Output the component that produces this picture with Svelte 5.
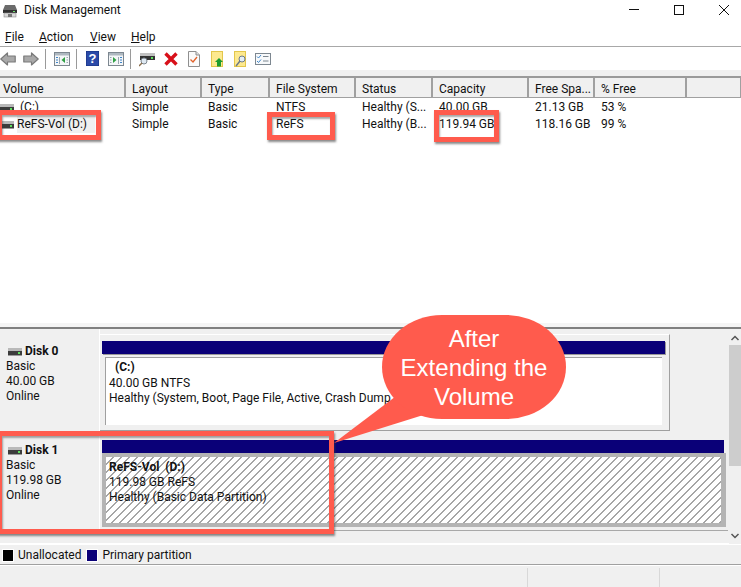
<script>
  const cols = [
    { label: 'Volume', w: 126 }, { label: 'Layout', w: 76 }, { label: 'Type', w: 68 },
    { label: 'File System', w: 86 }, { label: 'Status', w: 77 }, { label: 'Capacity', w: 96 },
    { label: 'Free Spa...', w: 66 }, { label: '% Free', w: 92 }, { label: '', w: 55 }
  ];
  const rows = [
    { name: '(C:)', cells: ['Simple', 'Basic', 'NTFS', 'Healthy (S...', '40.00 GB', '21.13 GB', '53 %'] },
    { name: 'ReFS-Vol (D:)', sel: true, cells: ['Simple', 'Basic', 'ReFS', 'Healthy (B...', '119.94 GB', '118.16 GB', '99 %'] }
  ];
</script>

{#snippet hdd()}
  <svg class="hdd" width="14" height="8" viewBox="0 0 14 8">
    <rect x="0" y="0" width="14" height="3" fill="#b9b9b9" />
    <rect x="0" y="3" width="14" height="4" fill="#3c3c3c" />
    <rect x="10" y="4" width="2" height="2" fill="#5fe05f" />
    <rect x="0" y="7" width="14" height="1" fill="#9a9a9a" />
  </svg>
{/snippet}

{#snippet arrow(dir)}
  <svg class="ti" width="16" height="16" viewBox="0 0 16 16">
    <path d={dir === 'l' ? 'M.8 8 7.500 2V5H15.200V11H7.500V14Z' : 'M15.200 8 8.500 2V5H.8V11H8.500V14Z'} fill="#a9a9a9" stroke="#7a7a7a" stroke-width="1.200" stroke-linejoin="round" />
  </svg>
{/snippet}

{#snippet panel(kind)}
  <svg class="ti" width="16" height="14" viewBox="0 0 16 14">
    <rect x=".5" y=".5" width="15" height="13" fill="#f4f6f8" stroke="#7d8790" />
    <rect x="1" y="1" width="14" height="2.5" fill="#aeb8c0" />
    {#if kind === 'l'}
      <path d="M5.500 5v7M12.500 5.500h1.500M12.500 8h1.500M12.500 10.500h1.500" stroke="#9aa6b0" fill="none" />
      <path d="M2 5.500h2M2 8h2M2 10.500h2" stroke="#3f86c9" fill="none" />
      <path d="M11 5v6L7.500 8Z" fill="#2ea043" />
    {:else}
      <path d="M10.500 5v7M2 5.500h1.500M2 8h1.500M2 10.500h1.500" stroke="#9aa6b0" fill="none" />
      <path d="M12 5.500h2M12 8h2M12 10.500h2" stroke="#3f86c9" fill="none" />
      <path d="M5 5v6L8.500 8Z" fill="#2ea043" />
    {/if}
  </svg>
{/snippet}

<div class="win">
  <div class="title">
    <svg width="14" height="14" viewBox="0 0 14 14">
      <path d="M2 1h10l2 5H0Z" fill="#6b6b6b" />
      <rect x="0" y="6" width="14" height="3" fill="#2f2f2f" />
      <rect x="10" y="7" width="2" height="1" fill="#6fe06f" />
      <rect x="1" y="9" width="12" height="4" fill="#d8d8d8" stroke="#8a8a8a" stroke-width=".6" />
      <rect x="5" y="10" width="4" height="3" fill="#777" />
    </svg>
    <span class="ttext">Disk Management</span>
    <div class="wbtns">
      <svg width="10" height="10" viewBox="0 0 10 10"><path d="M0 4.500h10" stroke="#111" /></svg>
      <svg width="10" height="10" viewBox="0 0 10 10"><rect x=".5" y=".5" width="9" height="9" fill="none" stroke="#111" /></svg>
      <svg width="10" height="10" viewBox="0 0 10 10"><path d="M0 0 10 10M10 0 0 10" stroke="#111" /></svg>
    </div>
  </div>

  <div class="menu">
    <span class="m1"><u>F</u>ile</span>
    <span class="m2"><u>A</u>ction</span>
    <span class="m3"><u>V</u>iew</span>
    <span class="m4"><u>H</u>elp</span>
  </div>

  <div class="toolbar">
    {@render arrow('l')}
    <span class="g7"></span>
    {@render arrow('r')}
    <i class="sep s1"></i>
    {@render panel('l')}
    <i class="sep s2"></i>
    <svg class="ti help" width="13" height="15" viewBox="0 0 13 15">
      <rect width="13" height="15" fill="#2b4aa8" />
      <rect x="0" y="0" width="13" height="15" fill="none" stroke="#16307e" />
      <text x="6.500" y="12" text-anchor="middle" class="q">?</text>
    </svg>
    <span class="g9"></span>
    {@render panel('r')}
    <i class="sep s3"></i>
    <svg class="ti dm" width="16" height="16" viewBox="0 0 16 16">
      <rect x="1" y="2" width="15" height="3" fill="#c2c2c2" />
      <rect x="1" y="5" width="15" height="4" fill="#333" />
      <rect x="12" y="6" width="2" height="2" fill="#5fe05f" />
      <circle cx="5" cy="10" r="3" fill="#dfe9f2" stroke="#7d8790" />
      <path d="M3 12 0 15" stroke="#8a6d4a" stroke-width="1.500" />
    </svg>
    <svg class="ti x" width="14" height="14" viewBox="0 0 14 14">
      <path d="M1.500 1.500 12.500 12.500M12.500 1.500 1.500 12.500" stroke="#d8101a" stroke-width="3.400" />
    </svg>
    <svg class="ti doc" width="12" height="16" viewBox="0 0 12 16">
      <path d="M.5.500H8L11.500 4V15.500H.5Z" fill="#fafafa" stroke="#8f8f8f" />
      <path d="M8 .5V4H11.500" fill="#ddd" stroke="#8f8f8f" />
      <path d="M2.500 8.500 5 11 9 6" fill="none" stroke="#e2622a" stroke-width="1.300" />
    </svg>
    <svg class="ti y1" width="13" height="16" viewBox="0 0 13 16">
      <rect x=".5" y=".5" width="11" height="15" fill="#fde98f" stroke="#e3c64b" />
      <path d="M8 7 12 11H10V15.500H6V11H4Z" fill="#1e9c2e" />
    </svg>
    <svg class="ti y2" width="13" height="16" viewBox="0 0 13 16">
      <rect x=".5" y=".5" width="11" height="15" fill="#fde98f" stroke="#e3c64b" />
      <circle cx="8" cy="8" r="3" fill="#e3eef6" stroke="#6d7a88" />
      <path d="M6 10 2 15" stroke="#6d7a88" stroke-width="1.500" />
    </svg>
    <svg class="ti chk" width="16" height="12" viewBox="0 0 16 12">
      <rect x=".5" y=".5" width="15" height="11" fill="#f7f9fb" stroke="#7d8790" />
      <path d="M2 3.500 3.500 5 6 2M2 8 3.500 9.500 6 6.500" fill="none" stroke="#3f86c9" />
      <path d="M8 3.500h5.500M8 8h5.500" stroke="#7d8790" />
    </svg>
  </div>

  <div class="band"></div>

  <div class="list">
    <div class="head">
      {#each cols as c}
        <div class="hc" style="width:{c.w}px">{c.label}</div>
      {/each}
    </div>
    {#each rows as r}
      <div class="row">
        <div class="cell first" style="width:{cols[0].w}px">
          {@render hdd()}
          <span class={r.sel ? 'nm sel' : 'nm c'}>{r.name}</span>
        </div>
        {#each r.cells as c, i}
          <div class="cell" style="width:{cols[i + 1].w}px">{c}</div>
        {/each}
      </div>
    {/each}
  </div>

  <div class="band2"></div>

  <div class="lower">
    <div class="disks">
      <div class="disk d0">
        <div class="dl">
          <div class="dn">{@render hdd()}<b>Disk 0</b></div>
          <div>Basic</div>
          <div>40.00 GB</div>
          <div>Online</div>
        </div>
        <div class="vwrap">
          <div class="vol v0">
            <div class="bar"></div>
            <div class="box">
              <b class="cname">(C:)</b>
              <div>40.00 GB NTFS</div>
              <div>Healthy (System, Boot, Page File, Active, Crash Dump</div>
            </div>
          </div>
        </div>
      </div>
      <div class="disk d1">
        <div class="dl">
          <div class="dn">{@render hdd()}<b>Disk 1</b></div>
          <div>Basic</div>
          <div>119.98 GB</div>
          <div>Online</div>
        </div>
        <div class="vwrap">
          <div class="vol v1">
            <div class="bar"></div>
            <div class="selbox">
              <div class="hatch">
                <b class="wsp">ReFS-Vol  (D:)</b>
                <div>119.98 GB ReFS</div>
                <div>Healthy (Basic Data Partition)</div>
              </div>
            </div>
          </div>
        </div>
      </div>
    </div>
    <div class="scroll">
      <svg width="10" height="6" viewBox="0 0 10 6"><path d="M1.500 5 5 1.500 8.500 5" fill="none" stroke="#555" stroke-width="1.500" /></svg>
      <div class="thumb"></div>
      <svg class="dn-ar" width="10" height="6" viewBox="0 0 10 6"><path d="M1.500 1 5 4.500 8.500 1" fill="none" stroke="#555" stroke-width="1.500" /></svg>
    </div>
  </div>

  <div class="legend">
    <i class="sw black"></i><span>Unallocated</span>
    <i class="sw blue"></i><span>Primary partition</span>
  </div>
  <div class="status"><i></i><i></i></div>

  <!-- annotations laid over the window -->
  <div class="hl h1"></div>
  <div class="hl h2"></div>
  <div class="hl h3"></div>
  <div class="hl h4"></div>
  <svg class="tail" width="120" height="60" viewBox="0 0 120 60"><path d="M0 59 78 0 118 22Z" fill="#ff5b4d" /></svg>
  <div class="bubble">After<br />Extending the<br />Volume</div>
</div>

<style>
  :global(body) { margin: 0; background: #fff; overflow: hidden; }
  .win {
    position: relative; width: 741px; height: 587px; overflow: hidden; background: #fff;
    display: flex; flex-direction: column;
    font: 12px/15px Roboto, "Noto Sans", sans-serif; color: #111;
  }
  .title { height: 21px; display: flex; align-items: center; padding-left: 3px; box-sizing: border-box; }
  .ttext { margin-left: 7px; }
  .wbtns { margin-left: auto; display: flex; gap: 35px; padding-right: 12px; margin-top: -2px; }
  .menu { height: 26px; display: flex; align-items: center; border-bottom: 1px solid #a8a8a8; box-sizing: border-box; padding-top: 7px; }
  .m1 { margin-left: 5px; width: 34px; }
  .m2 { width: 51px; }
  .m3 { width: 41px; }
  .toolbar { height: 23px; display: flex; align-items: center; flex: none; }
  .ti { flex: none; display: block; }
  .g7 { width: 7px; }
  .g9 { width: 9px; }
  .sep { width: 1px; height: 20px; background: #9a9a9a; flex: none; }
  .s1 { margin: 0 8px 0 6px; }
  .s2 { margin: 0 9px 0 6px; }
  .s3 { margin: 0 8px 0 6px; }
  .x { margin-left: 9px; }
  .doc { margin-left: 10px; }
  .y1 { margin-left: 11px; }
  .y2 { margin-left: 10px; }
  .chk { margin-left: 8px; }
  .q { font: bold 13px "Liberation Sans", sans-serif; fill: #fff; }
  .band { height: 8px; background: #f0f0f0; border-bottom: 2px solid #9a9a9a; box-sizing: border-box; flex: none; }
  .list { height: 245px; flex: none; background: #fff; }
  .head { display: flex; height: 20px; background: #fff; }
  .hc {
    flex: none; box-sizing: border-box; padding: 4px 0 0 3px; background: #f0f0f0;
    border-right: 2px solid #a0a0a0; border-bottom: 1px solid #a0a0a0; white-space: nowrap;
  }
  .hc:not(:first-child) { padding-left: 6px; }
  .row { display: flex; height: 17px; line-height: 17px; position: relative; top: 1px; }
  .cell { flex: none; box-sizing: border-box; padding-left: 6px; white-space: nowrap; }
  .first { padding-left: 0; display: flex; align-items: center; }
  .nm { margin-left: 3px; }
  .nm.c { margin-left: 6px; }
  .sel { background: #f0f0f0; padding-right: 8px; }
  .band2 { height: 6px; background: #f5f5f5; border-bottom: 2px solid #808080; box-sizing: border-box; flex: none; }
  .lower { height: 215px; flex: none; background: #f0f0f0; display: flex; }
  .disks { width: 729px; flex: none; border-bottom: 1px solid #fff; }
  .disk { display: flex; box-sizing: border-box; }
  .d0 { height: 103px; }
  .d1 { height: 99px; border-bottom: 1px solid #a8a8a8; margin-right: 1px; }
  .dl { width: 100px; flex: none; box-sizing: border-box; padding: 15px 0 0 6px; border-right: 1px solid #fff; }
  .d1 .dl { padding-top: 11px; }
  .dn { display: flex; align-items: center; gap: 3px; margin-left: 2px; }
  .vwrap { flex: 1; min-width: 0; }
  .vol { box-sizing: border-box; }
  .v0 { width: 570px; height: 97px; margin-top: 5px; padding: 6px 0 0 2px; border-right: 1px solid #a0a0a0; border-bottom: 1px solid #a0a0a0; border-top: 1px solid #fff; }
  .bar { height: 13px; background: #0a0078; }
  .v0 .bar { width: 563px; box-shadow: 1px 1px 0 #9a9a9a; }
  .box { margin: 3px 0 0 3px; width: 557px; height: 68px; box-sizing: border-box; background: #fff; border-top: 1px solid #a0a0a0; border-left: 1px solid #a0a0a0; padding: 2px 0 0 3px; white-space: nowrap; overflow: hidden; }
  .cname { display: block; margin: 0 0 1px 6px; }
  .wsp { white-space: pre; }
  .v1 { margin-top: 8px; width: 624px; padding-left: 2px; }
  .selbox { background: #b4b4b4; padding: 4px 5px 4px 4px; height: 74px; box-sizing: border-box; width: 624px; }
  .v1 .bar { width: 622px; }
  .hatch {
    height: 66px; box-sizing: border-box; padding: 3px 0 0 3px; white-space: nowrap;
    background: repeating-linear-gradient(135deg, #fff 0, #fff 4.857px, #a6a6a6 4.857px, #a6a6a6 5.657px);
  }
  .scroll { width: 12px; flex: none; display: flex; flex-direction: column; align-items: center; padding-top: 6px; box-sizing: border-box; }
  .thumb { width: 12px; height: 121px; background: #cdcdcd; margin-top: 4px; }
  .dn-ar { margin-top: auto; margin-bottom: 5px; }
  .legend { height: 20px; flex: none; display: flex; align-items: center; background: #f0f0f0; border-top: 1px solid #fff; box-sizing: border-box; padding: 2px 0 0 3px; }
  .sw { width: 10px; height: 11px; flex: none; outline: 1px solid #fff; margin-right: 5px; }
  .black { background: #000; }
  .blue { background: #0a0078; margin-left: 6px; }
  .status { flex: 1; background: #f0f0f0; border-top: 1px solid #a0a0a0; position: relative; box-shadow: inset 0 1px 0 #fff; }
  .status i { position: absolute; top: 3px; bottom: 0; width: 1px; background: #d8d8d8; }
  .status i:nth-child(1) { left: 527px; }
  .status i:nth-child(2) { left: 659px; }
  .hl { position: absolute; box-sizing: border-box; border: 5px solid #ff5b4d; box-shadow: 1px 2px 2px rgba(60,60,60,.6), inset 1px 2px 2px rgba(60,60,60,.45); }
  .h1 { left: -3px; top: 110px; width: 104px; height: 30px; }
  .h2 { left: 267px; top: 112px; width: 68px; height: 28px; }
  .h3 { left: 434px; top: 110px; width: 65px; height: 32px; }
  .h4 { left: -3px; top: 431px; width: 337px; height: 103px; }
  .tail { position: absolute; left: 334px; top: 384px; }
  .bubble {
    position: absolute; left: 382px; top: 315px; width: 184px; height: 104px; box-sizing: border-box;
    background: #ff5b4d; border-radius: 60px / 52px; color: #fff; text-align: center;
    font: 24px/29px "Liberation Sans", sans-serif; padding-top: 9px;
  }
</style>
